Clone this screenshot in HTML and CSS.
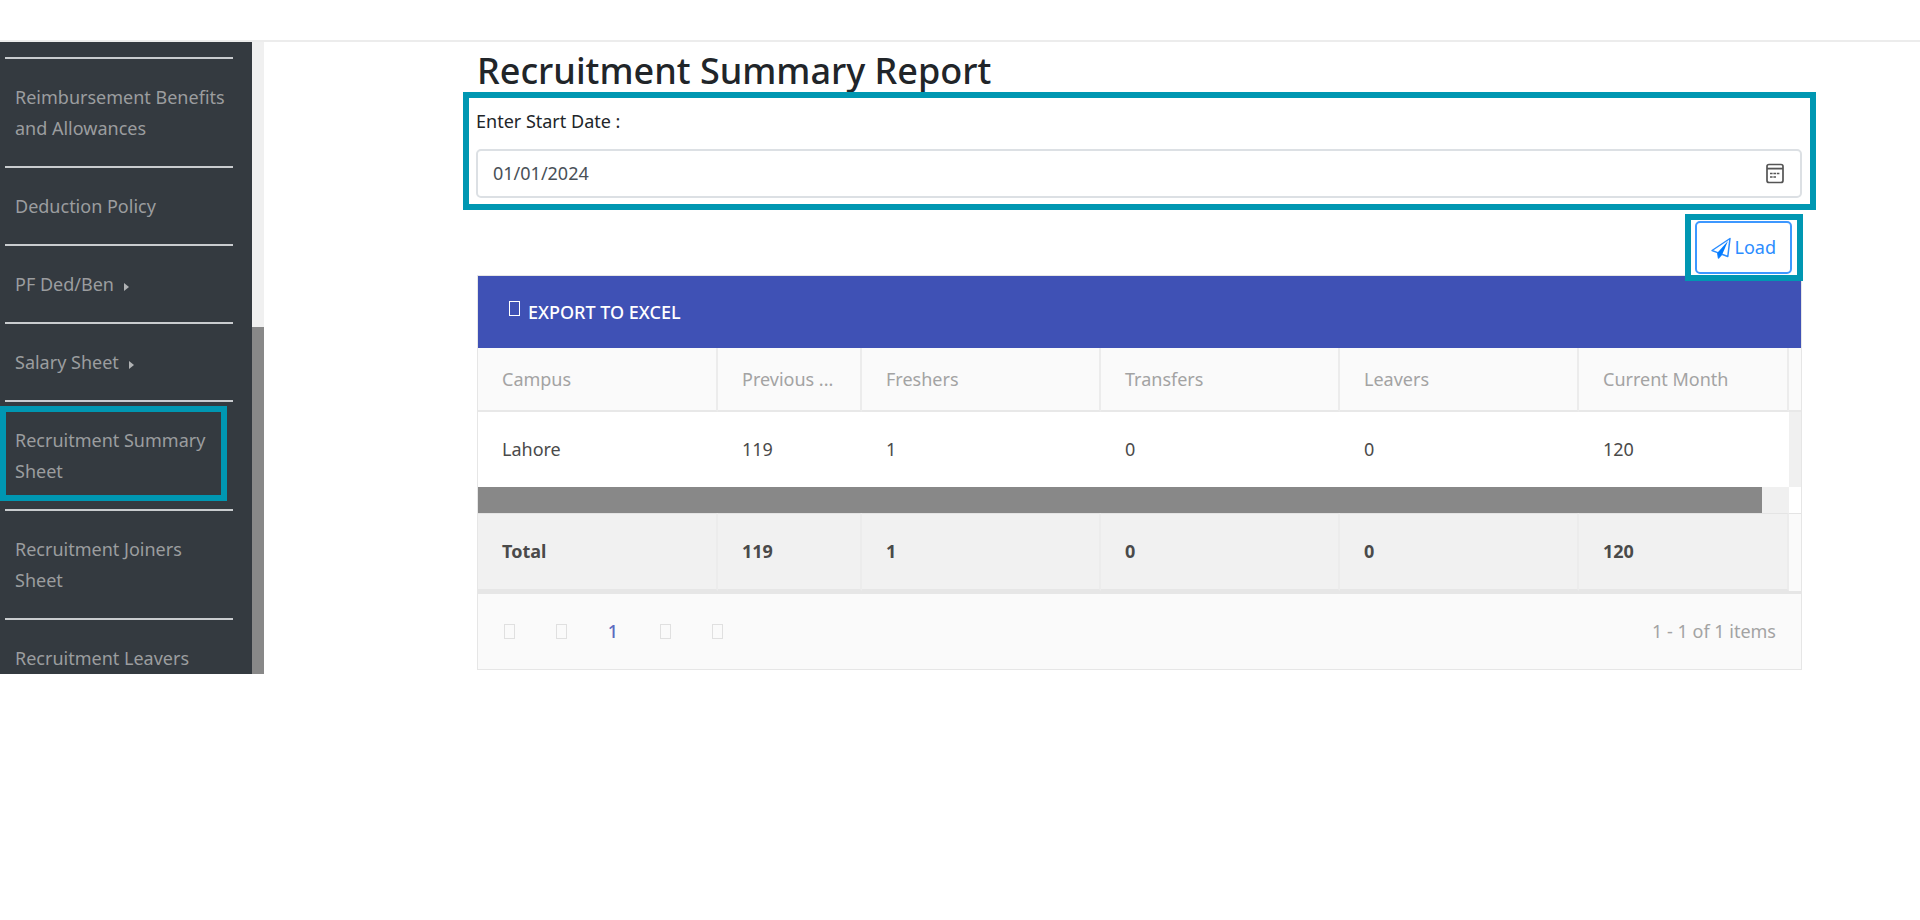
FILE: index.html
```html
<!DOCTYPE html>
<html lang="en">
<head>
<meta charset="utf-8">
<title>Recruitment Summary Report</title>
<link rel="stylesheet" href="styles.css">
</head>
<body>
<header class="topbar"></header>
<div class="layout">
  <aside class="sidebar">
    <nav class="menu">
      <ul class="menu-list">
        <li class="menu-item"><a href="#">Reimbursement Benefits and Allowances</a></li>
        <li class="menu-item"><a href="#">Deduction Policy</a></li>
        <li class="menu-item"><a href="#">PF Ded/Ben<span class="caret"></span></a></li>
        <li class="menu-item"><a href="#">Salary Sheet<span class="caret"></span></a></li>
        <li class="menu-item marked"><a href="#">Recruitment Summary Sheet</a></li>
        <li class="menu-item"><a href="#">Recruitment Joiners Sheet</a></li>
        <li class="menu-item"><a href="#">Recruitment Leavers</a></li>
      </ul>
    </nav>
    <div class="scroll-track"><div class="scroll-thumb"></div></div>
  </aside>
  <main class="content">
    <h1 class="title">Recruitment Summary Report</h1>
    <div class="field">
      <label class="field-label" for="start">Enter Start Date :</label>
      <div class="date-box">
        <input class="date-input" id="start" type="text" value="01/01/2024">
        <button class="date-button" type="button" aria-label="Open calendar">
          <svg width="20" height="22" viewBox="0 0 20 22" fill="none" stroke="#555" stroke-width="1.7">
            <rect x="2" y="1.5" width="16" height="18" rx="2"/>
            <path d="M2 5.6h16" stroke-width="1.8"/>
            <path d="M5 10.5h10M5 14h6.5" stroke-dasharray="2.6 .8" stroke-width="1.7"/>
          </svg>
        </button>
      </div>
    </div>
    <div class="actions">
      <div class="action-mark">
        <button class="load" type="button">
          <svg width="20" height="22" viewBox="0 0 20 22">
            <path d="M1 13.5 19 1.5 16.8 19.5 10.8 17.2 7.5 21 6.6 15.6Z" fill="none" stroke="#2b8dff" stroke-width="1.5" stroke-linejoin="round"/>
            <path d="M17 4 6.6 15.6 7.5 21 11.6 16.6Z" fill="#007bff"/>
          </svg>
          <span>Load</span>
        </button>
      </div>
    </div>
    <section class="grid">
      <div class="toolbar">
        <button class="export" type="button"><span class="glyph"></span>EXPORT TO EXCEL</button>
      </div>
      <table class="table">
        <colgroup>
          <col class="c-campus"><col class="c-prev"><col class="c-mid"><col class="c-mid"><col class="c-mid"><col><col class="c-gutter">
        </colgroup>
        <thead>
          <tr><th>Campus</th><th>Previous ...</th><th>Freshers</th><th>Transfers</th><th>Leavers</th><th>Current Month</th><td></td></tr>
        </thead>
        <tbody>
          <tr class="row"><td>Lahore</td><td>119</td><td>1</td><td>0</td><td>0</td><td>120</td><td class="gutter"></td></tr>
          <tr class="scroll-row"><td colspan="6"><div class="h-track"><div class="h-thumb"></div></div></td><td></td></tr>
        </tbody>
        <tfoot>
          <tr><td>Total</td><td>119</td><td>1</td><td>0</td><td>0</td><td>120</td><td class="foot-gutter"></td></tr>
        </tfoot>
      </table>
      <div class="pager">
        <div class="pages">
          <button type="button" aria-label="First page"><span class="glyph"></span></button>
          <button type="button" aria-label="Previous page"><span class="glyph"></span></button>
          <button class="current" type="button">1</button>
          <button type="button" aria-label="Next page"><span class="glyph"></span></button>
          <button type="button" aria-label="Last page"><span class="glyph"></span></button>
        </div>
        <span class="info">1 - 1 of 1 items</span>
      </div>
    </section>
  </main>
</div>
</body>
</html>
```
FILE: styles.css
```css
*, *::after { box-sizing: border-box; }
body {
  margin: 0;
  background: #fff;
  color: #212529;
  font: 18px/31px "Noto Sans", "Open Sans", sans-serif;
}
button, input { font: inherit; color: inherit; }
button { background: none; border: 0; padding: 0; cursor: pointer; }

.topbar { height: 42px; border-bottom: 2px solid #ececec; }
.layout { display: grid; grid-template-columns: 264px 1fr; }

/* Side menu: as tall as the content beside it, the rest is scrolled away */
.sidebar {
  display: grid;
  grid-template-columns: 1fr 12px;
  height: 0;
  min-height: 100%;
  overflow: hidden;
}
.menu { background: #343a40; overflow: hidden; min-height: 0; }
.menu-list { list-style: none; margin: 0; padding: 15px 19px 0 5px; }
.menu-item {
  position: relative;
  padding: 23px 0 22px 10px;
  border-top: 2px solid #c9cccf;
}
.menu-item a { color: #9b9d9f; text-decoration: none; display: block; }
.caret {
  display: inline-block;
  margin-left: 10px;
  border: solid transparent;
  border-width: 4px 0 4px 5px;
  border-left-color: #b0b2b4;
}
.marked::after {
  content: "";
  position: absolute;
  top: 4px;
  bottom: 8px;
  left: -5px;
  width: 227px;
  border: 6px solid #0097b2;
  pointer-events: none;
}
.scroll-track { background: #f0f0f0; padding-top: 285px; display: grid; min-height: 0; }
.scroll-thumb { background: #888; }

.content { padding: 4px 118px 4px 213px; }
.title { margin: 0; height: 46px; font-size: 36px; line-height: 50px; font-weight: 500; }

.field {
  position: relative;
  margin: 0 -14px;
  padding: 8px 8px 6px 7px;
  border: 6px solid #0097b2;
}
.field-label { display: block; margin-bottom: 12px; }
.date-box {
  display: flex;
  align-items: center;
  height: 49px;
  padding: 0 15px;
  border: 2px solid #dce0e4;
  border-radius: 5px;
}
.date-input { flex: 1; border: 0; outline: 0; padding: 0; background: none; color: #495057; }
.date-button { display: flex; }

.actions { display: flex; justify-content: flex-end; margin: 4px -1px -6px 0; }
.action-mark { position: relative; border: 6px solid #0097b2; padding: 1px 5px 1px 4px; background: #fff; }
.load {
  display: flex;
  align-items: center;
  gap: 4px;
  height: 53px;
  padding: 0 14px;
  border: 2px solid #3d98ff;
  border-radius: 5px;
  color: #2b8dff;
}

.grid { border: 1px solid #e6e6e6; background: #fafafa; }
.toolbar { display: flex; align-items: center; height: 72px; padding: 0 31px; background: #3f51b5; }
.export { display: flex; align-items: center; gap: 8px; color: #fff; font-weight: 500; }
.glyph { display: block; width: 11px; height: 15px; border: 1px solid currentColor; }
.export .glyph { margin-bottom: 7px; }

.table { width: 100%; table-layout: fixed; border-collapse: separate; border-spacing: 0; color: #4a4a4a; }
.c-campus { width: 240px; }
.c-prev { width: 144px; }
.c-mid { width: 239px; }
.c-gutter { width: 12px; }
.table th, .table td { padding: 0 0 0 24px; text-align: left; font-weight: 400; }
.table th { color: #a3a3a3; }
.table thead th, .table thead td { height: 64px; border-bottom: 2px solid #e8e8e8; }
.table th, .table tfoot td { border-right: 2px solid #ececec; }
.row td { height: 75px; background: #fff; }
.row .gutter { background: #f0f0f0; padding: 0; }
.scroll-row td { padding: 0; background: #fff; }
.h-track { height: 26px; background: #f0f0f0; padding-right: 27px; }
.h-thumb { height: 26px; background: #888; }
.table tfoot td { height: 78px; background: #f1f1f1; font-weight: 700; border-top: 1px solid #e4e4e4; border-bottom: 2px solid #e6e6e6; }
.table tfoot .foot-gutter { background: #fafafa; border-right: 0; border-bottom-color: #fafafa; padding: 0; }

.pager {
  display: flex;
  align-items: center;
  justify-content: space-between;
  height: 78px;
  padding: 0 25px 0 5px;
  border-top: 3px solid #e6e6e6;
  color: #a3a3a3;
}
.pages { display: flex; }
.pages button { width: 52px; display: flex; align-items: center; justify-content: center; color: #e0e0e0; }
.pages .current { color: #5c6bc0; font-weight: 500; }
```
